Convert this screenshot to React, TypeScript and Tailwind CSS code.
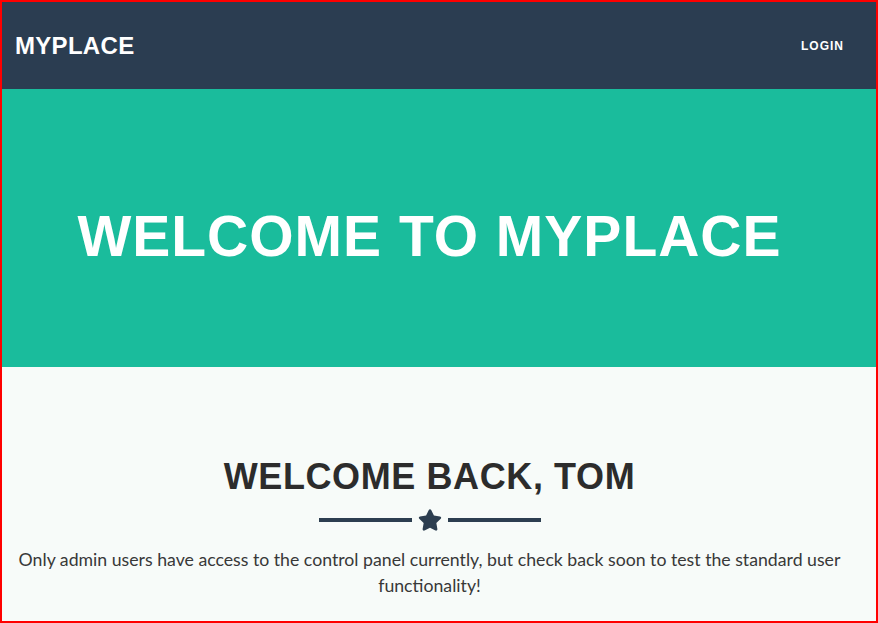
import React from 'react';
import { FaStar } from 'react-icons/fa';

const headingFont = { fontFamily: '"Liberation Sans", Arial, sans-serif' };

const Navbar: React.FC = () => (
  <nav className="h-[87px] bg-[#2b3d51] flex items-center justify-between pl-[13px] pr-[32px]" style={headingFont}>
    <a className="text-[24px] font-bold text-white tracking-[0.3px] leading-none">MYPLACE</a>
    <a className="text-[12px] font-bold text-white tracking-[1px] leading-none">LOGIN</a>
  </nav>
);

const Hero: React.FC = () => (
  <header className="h-[278px] bg-[#1abc9c] pt-[119px]">
    <div className="mr-[19px] text-center">
      <h1 className="text-[57px] font-bold text-white leading-none tracking-[1px]" style={headingFont}>
        WELCOME TO MYPLACE
      </h1>
    </div>
  </header>
);

const Divider: React.FC = () => (
  <div className="flex items-center justify-center gap-[6px] mt-[11px]">
    <span className="block w-[93px] h-[4px] bg-[#2c3e50]" />
    <FaStar className="w-[24px] h-[22px] text-[#2c3e50]" />
    <span className="block w-[93px] h-[4px] bg-[#2c3e50]" />
  </div>
);

export default function App() {
  return (
    <div className="h-[623px] w-[878px] border-2 border-[#ff0000] bg-[#f7fbf9] overflow-hidden">
      <Navbar />
      <Hero />
      <section className="pt-[88px] mr-[19px] px-[15px]">
        <h2 className="text-[36px] font-bold text-[#2c2c2c] text-center leading-[1.2] tracking-[0.6px]" style={headingFont}>
          WELCOME BACK, TOM
        </h2>
        <Divider />
        <p className="mt-[16px] text-center text-[17.7px] leading-[26px] text-[#383838]" style={{ fontFamily: 'Lato, "Open Sans", sans-serif' }}>
          Only admin users have access to the control panel currently, but check back soon to test the standard user functionality!
        </p>
      </section>
    </div>
  );
}
